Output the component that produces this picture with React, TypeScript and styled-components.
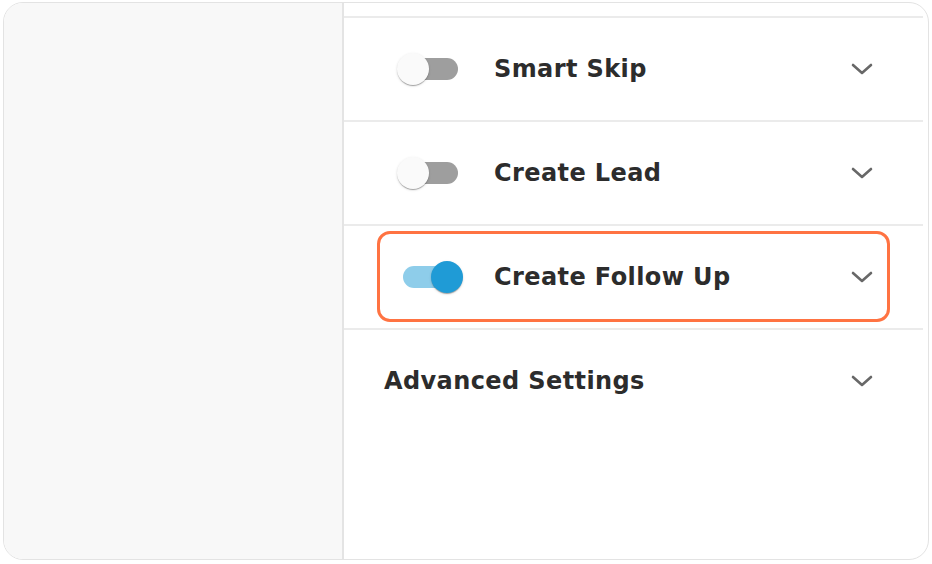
import React from "react";
import styled, { createGlobalStyle } from "styled-components";

const Global = createGlobalStyle`
  html, body { margin: 0; padding: 0; background: #ffffff; }
  body { font-family: "DejaVu Sans", "Liberation Sans", sans-serif; }
  * { box-sizing: border-box; }
`;

const Card = styled.div`
  margin: 2px 0 0 3px;
  width: 926px;
  height: 558px;
  border: 1px solid #e3e3e3;
  border-radius: 20px;
  overflow: hidden;
  display: grid;
  grid-template-columns: 340px 1fr;
  background: #ffffff;
`;

const Sidebar = styled.aside`
  background: #f8f8f8;
  border-right: 2px solid #e4e4e4;
`;

const Panel = styled.section`
  padding: 13px 5px 0 0;
  display: flex;
  flex-direction: column;
`;

const Row = styled.div`
  position: relative;
  height: 104px;
  border-top: 2px solid #ebebeb;
  display: flex;
  align-items: center;
  padding: 0 50px 0 40px;
`;

const Label = styled.span`
  flex: 1;
  font-size: 24px;
  font-weight: 700;
  color: #2c2c2c;
  letter-spacing: 0.4px;
`;

const SwitchWrap = styled.div`
  padding-left: 19px;
  margin-right: 36px;
  display: flex;
  align-items: center;
`;

const Track = styled.div<{ $on: boolean }>`
  width: 55px;
  height: 22px;
  border-radius: 11px;
  background: ${(p) => (p.$on ? "#8ecdea" : "#9e9e9e")};
  display: flex;
  align-items: center;
  justify-content: ${(p) => (p.$on ? "flex-end" : "flex-start")};
`;

const Thumb = styled.div<{ $on: boolean }>`
  width: 32px;
  height: 32px;
  border-radius: 50%;
  flex-shrink: 0;
  margin: ${(p) => (p.$on ? "0 -5px 0 0" : "0 0 0 -6px")};
  background: ${(p) => (p.$on ? "#1f9bd6" : "#fafafa")};
  box-shadow: 0 2px 1px -1px rgba(0, 0, 0, 0.2), 0 1px 1px 0 rgba(0, 0, 0, 0.14),
    0 1px 3px 0 rgba(0, 0, 0, 0.12);
`;

const Highlight = styled.div`
  position: absolute;
  top: 5px;
  bottom: 6px;
  left: 33px;
  right: 33px;
  border: 3px solid #ff7342;
  border-radius: 13px;
  pointer-events: none;
`;

const Chevron = () => (
  <svg width="22" height="12" viewBox="0 0 22 12" fill="none">
    <polyline
      points="2,2 11,10 20,2"
      stroke="#686868"
      strokeWidth="2.6"
      strokeLinecap="round"
      strokeLinejoin="round"
    />
  </svg>
);

const Switch = ({ on }: { on: boolean }) => (
  <SwitchWrap>
    <Track $on={on}>
      <Thumb $on={on} />
    </Track>
  </SwitchWrap>
);

const items = [
  { label: "Smart Skip", on: false, highlight: false },
  { label: "Create Lead", on: false, highlight: false },
  { label: "Create Follow Up", on: true, highlight: true },
];

export default function App() {
  return (
    <>
      <Global />
      <Card>
        <Sidebar />
        <Panel>
          {items.map((it) => (
            <Row key={it.label}>
              {it.highlight && <Highlight />}
              <Switch on={it.on} />
              <Label>{it.label}</Label>
              <Chevron />
            </Row>
          ))}
          <Row>
            <Label>Advanced Settings</Label>
            <Chevron />
          </Row>
        </Panel>
      </Card>
    </>
  );
}
